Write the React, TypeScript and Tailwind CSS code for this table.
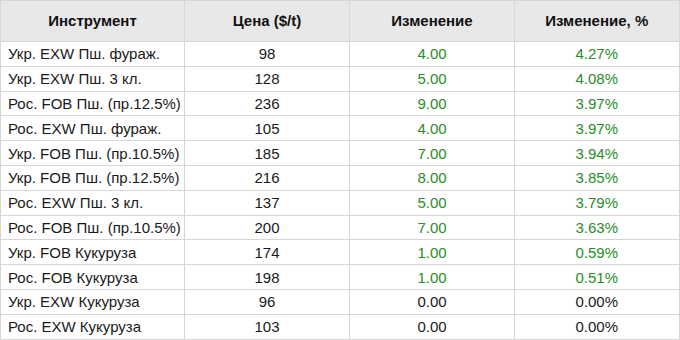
const rows = [
  ["Укр. EXW Пш. фураж.", "98", "4.00", "4.27%"],
  ["Укр. EXW Пш. 3 кл.", "128", "5.00", "4.08%"],
  ["Рос. FOB Пш. (пр.12.5%)", "236", "9.00", "3.97%"],
  ["Рос. EXW Пш. фураж.", "105", "4.00", "3.97%"],
  ["Укр. FOB Пш. (пр.10.5%)", "185", "7.00", "3.94%"],
  ["Укр. FOB Пш. (пр.12.5%)", "216", "8.00", "3.85%"],
  ["Рос. EXW Пш. 3 кл.", "137", "5.00", "3.79%"],
  ["Рос. FOB Пш. (пр.10.5%)", "200", "7.00", "3.63%"],
  ["Укр. FOB Кукуруза", "174", "1.00", "0.59%"],
  ["Рос. FOB Кукуруза", "198", "1.00", "0.51%"],
  ["Укр. EXW Кукуруза", "96", "0.00", "0.00%"],
  ["Рос. EXW Кукуруза", "103", "0.00", "0.00%"],
];

export default function App() {
  return (
    <div className="w-[680px] h-[340px] bg-white font-['Liberation_Sans',Arial,sans-serif] text-[15px] text-[#1a1a1a]">
      <table className="w-[679px] border-collapse table-fixed">
        <colgroup>
          <col className="w-[184px]" />
          <col className="w-[165px]" />
          <col className="w-[165px]" />
          <col className="w-[165px]" />
        </colgroup>
        <thead>
          <tr className="h-[41px] bg-[#e8e8e8] text-[#111]">
            <th className="border border-[#d6d6d6] font-bold text-center">Инструмент</th>
            <th className="border border-[#d6d6d6] font-bold text-center">Цена ($/t)</th>
            <th className="border border-[#d6d6d6] font-bold text-center">Изменение</th>
            <th className="border border-[#d6d6d6] border-r-2 font-bold text-center">Изменение, %</th>
          </tr>
        </thead>
        <tbody>
          {rows.map((r) => {
            const up = parseFloat(r[2]) > 0;
            const color = up ? "text-[#2a8c2a]" : "text-[#1a1a1a]";
            return (
              <tr key={r[0]} className="h-[24.8px]">
                <td className="border border-[#d6d6d6] pl-[7px] text-left leading-none whitespace-nowrap">{r[0]}</td>
                <td className="border border-[#d6d6d6] text-center leading-none">{r[1]}</td>
                <td className={`border border-[#d6d6d6] text-center leading-none ${color}`}>{r[2]}</td>
                <td className={`border border-[#d6d6d6] border-r-2 text-center leading-none ${color}`}>{r[3]}</td>
              </tr>
            );
          })}
        </tbody>
      </table>
    </div>
  );
}
